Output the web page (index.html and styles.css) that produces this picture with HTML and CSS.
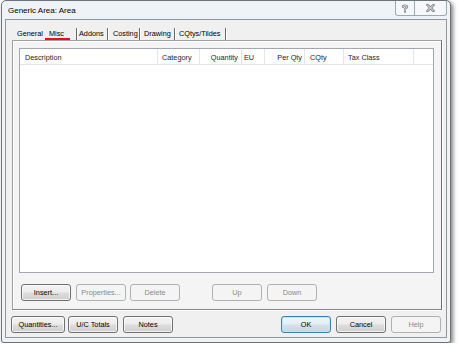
FILE: index.html
```html
<!DOCTYPE html>
<html>
<head>
<meta charset="utf-8">
<link rel="stylesheet" href="styles.css">
</head>
<body>
<div class="window">
  <div class="titlebar">
    <span class="title">Generic Area: Area</span>
    <div class="caption-btns">
      <div class="cbtn help">
        <svg width="8" height="9" viewBox="0 0 8 9">
          <path d="M2 2.8 C2 1.2 6 1.2 6 2.8 C6 4.2 4 4 4 5.6" fill="none" stroke="#8a8a8a" stroke-width="2.4" stroke-linecap="round"/>
          <circle cx="4" cy="7.8" r="1.1" fill="#8a8a8a"/>
          <path d="M2 2.8 C2 1.2 6 1.2 6 2.8 C6 4.2 4 4 4 5.6" fill="none" stroke="#fff" stroke-width="0.7" stroke-linecap="round"/>
        </svg>
      </div>
      <div class="cbtn close">
        <svg width="9" height="8" viewBox="0 0 9 8">
          <path d="M1.5 1 L7.5 7 M7.5 1 L1.5 7" stroke="#8a8a8a" stroke-width="2.6" stroke-linecap="square"/>
          <path d="M1.5 1 L7.5 7 M7.5 1 L1.5 7" stroke="#fff" stroke-width="0.8"/>
        </svg>
      </div>
    </div>
  </div>
  <div class="client">
    <div class="tabs">
      <div class="tab t-general">General</div>
      <div class="tab t-misc sep">Misc</div>
      <div class="tab t-addons sep">Addons</div>
      <div class="tab t-costing sep">Costing</div>
      <div class="tab t-drawing sep">Drawing</div>
      <div class="tab t-cqtys sep">CQtys/Tildes</div>
    </div>
    <div class="panel">
      <div class="list">
        <div class="header">
          <div class="col c-desc">Description</div>
          <div class="col c-cat">Category</div>
          <div class="col c-qty right">Quantity</div>
          <div class="col c-eu">EU</div>
          <div class="col c-per right">Per Qty</div>
          <div class="col c-cqty">CQty</div>
          <div class="col c-tax">Tax Class</div>
          <div class="col c-fill"></div>
        </div>
      </div>
      <div class="btnrow">
        <div class="btn b-insert">Insert...</div>
        <div class="btn disabled b-props">Properties...</div>
        <div class="btn disabled b-delete">Delete</div>
        <div class="btn disabled b-up">Up</div>
        <div class="btn disabled b-down">Down</div>
      </div>
    </div>
    <div class="footer">
      <div class="btn b-quant">Quantities...</div>
      <div class="btn b-uc">U/C Totals</div>
      <div class="btn b-notes">Notes</div>
      <div class="spacer"></div>
      <div class="btn default b-ok">OK</div>
      <div class="btn b-cancel">Cancel</div>
      <div class="btn disabled b-help">Help</div>
    </div>
  </div>
</div>
</body>
</html>
```

FILE: styles.css
```css
html, body {
  margin: 0;
  padding: 0;
  background: #ffffff;
}
body {
  font-family: "Liberation Sans", Arial, sans-serif;
  font-size: 7.3px;
  color: #000;
}
.window {
  box-sizing: border-box;
  margin-left: 1px;
  width: 450px;
  height: 343px;
  border: 1px solid #6f7378;
  border-radius: 5px 5px 3px 3px;
  background: #eef3f8;
  box-shadow: 2px 2px 4px rgba(0, 0, 0, 0.5);
  display: flex;
  flex-direction: column;
}
.titlebar {
  height: 18px;
  display: flex;
  align-items: flex-start;
}
.title {
  font-size: 8px;
  padding-left: 6px;
  padding-top: 1px;
  line-height: 18px;
  color: #000;
}
.caption-btns {
  margin-left: auto;
  margin-right: 3px;
  display: flex;
  height: 14px;
  border: 1px solid #9ea7b2;
  border-top: none;
  border-radius: 0 0 3px 3px;
  background: #f5f8fb;
}
.cbtn {
  display: flex;
  align-items: center;
  justify-content: center;
  height: 14px;
}
.cbtn.help {
  width: 18px;
  border-right: 1px solid #9ea7b2;
}
.cbtn.close {
  width: 31px;
}
.client {
  flex: 1;
  margin: 0 3px 4px 3px;
  border: 1px solid #8f969e;
  background: #f0f0f0;
  display: flex;
  flex-direction: column;
}
.tabs {
  height: 20px;
  display: flex;
  padding-left: 6px;
}
.tab {
  box-sizing: border-box;
  height: 12px;
  margin-top: 8px;
  line-height: 11px;
  white-space: nowrap;
  position: relative;
}
.tab.sep {
  border-right: 1px solid #6a6a6a;
  box-shadow: 1px 0 0 #ffffff;
}
.t-general { width: 33px; padding-left: 5px; }
.t-misc { width: 32px; padding-left: 4px; }
.t-misc::after {
  content: "";
  position: absolute;
  left: 0;
  width: 25px;
  bottom: 0;
  height: 2px;
  background: #e8101a;
}
.t-addons { width: 31px; padding-left: 2px; }
.t-costing { width: 32px; padding-left: 5px; }
.t-drawing { width: 35px; padding-left: 4px; }
.t-cqtys { width: 51px; padding-left: 4px; }
.panel {
  box-sizing: border-box;
  margin-left: 6px;
  width: 430px;
  height: 270px;
  border: 1px solid #a0a0a0;
  border-right-color: #6e6e6e;
  border-bottom-color: #8a8a8a;
  box-shadow: 1px 1px 0 #ffffff, inset 1px 1px 0 #ffffff;
  background: #f4f4f4;
  display: flex;
  flex-direction: column;
}
.list {
  box-sizing: border-box;
  margin: 7px 0 0 6px;
  width: 415px;
  height: 225px;
  border: 1px solid #a3a8ae;
  background: #ffffff;
}
.header {
  box-sizing: border-box;
  height: 16px;
  display: flex;
  border-bottom: 1px solid #e3e5e8;
}
.col {
  box-sizing: border-box;
  height: 15px;
  padding-top: 1px;
  line-height: 15px;
  border-right: 1px solid #e3e5e8;
  white-space: nowrap;
  color: #1e1e1e;
}
.col.right { text-align: right; }
.c-desc { width: 138px; padding-left: 5px; }
.c-cat { width: 42px; padding-left: 4px; }
.c-qty { width: 42px; padding-right: 3px; }
.c-eu { width: 23px; padding-left: 2px; }
.c-per { width: 40px; padding-right: 2px; }
.c-cqty { width: 39px; padding-left: 5px; }
.c-tax { width: 70px; padding-left: 4px; }
.c-fill { flex: 1; border-right: none; }
.btnrow {
  display: flex;
  margin-top: 11px;
  padding-left: 8px;
}
.btn {
  box-sizing: border-box;
  width: 50px;
  height: 17px;
  line-height: 15px;
  text-align: center;
  border: 1px solid #707070;
  border-radius: 3px;
  background: linear-gradient(#f3f3f3 0%, #ececec 48%, #dddddd 52%, #cfcfcf 100%);
  box-shadow: inset 0 0 0 1px rgba(255, 255, 255, 0.7);
  white-space: nowrap;
  color: #000;
}
.btn.disabled {
  border-color: #adb2b5;
  background: #f4f4f4;
  box-shadow: none;
  color: #8a8a8a;
}
.btn.default {
  border-color: #3c7fb1;
  box-shadow: inset 0 0 0 1px #bfe6f8;
  background: linear-gradient(#f0f6fa 0%, #e4eef5 48%, #d4e1ea 52%, #c6d6e2 100%);
}
.b-props { margin-left: 5px; }
.b-delete { margin-left: 4px; }
.b-up { margin-left: 32px; }
.b-down { margin-left: 5px; }
.footer {
  display: flex;
  margin-top: 6px;
  padding: 0 5px;
}
.b-quant { width: 54px; }
.b-uc { margin-left: 3px; }
.b-notes { margin-left: 5px; }
.spacer { flex: 1; }
.b-cancel { margin-left: 5px; }
.b-help { margin-left: 5px; }
```
